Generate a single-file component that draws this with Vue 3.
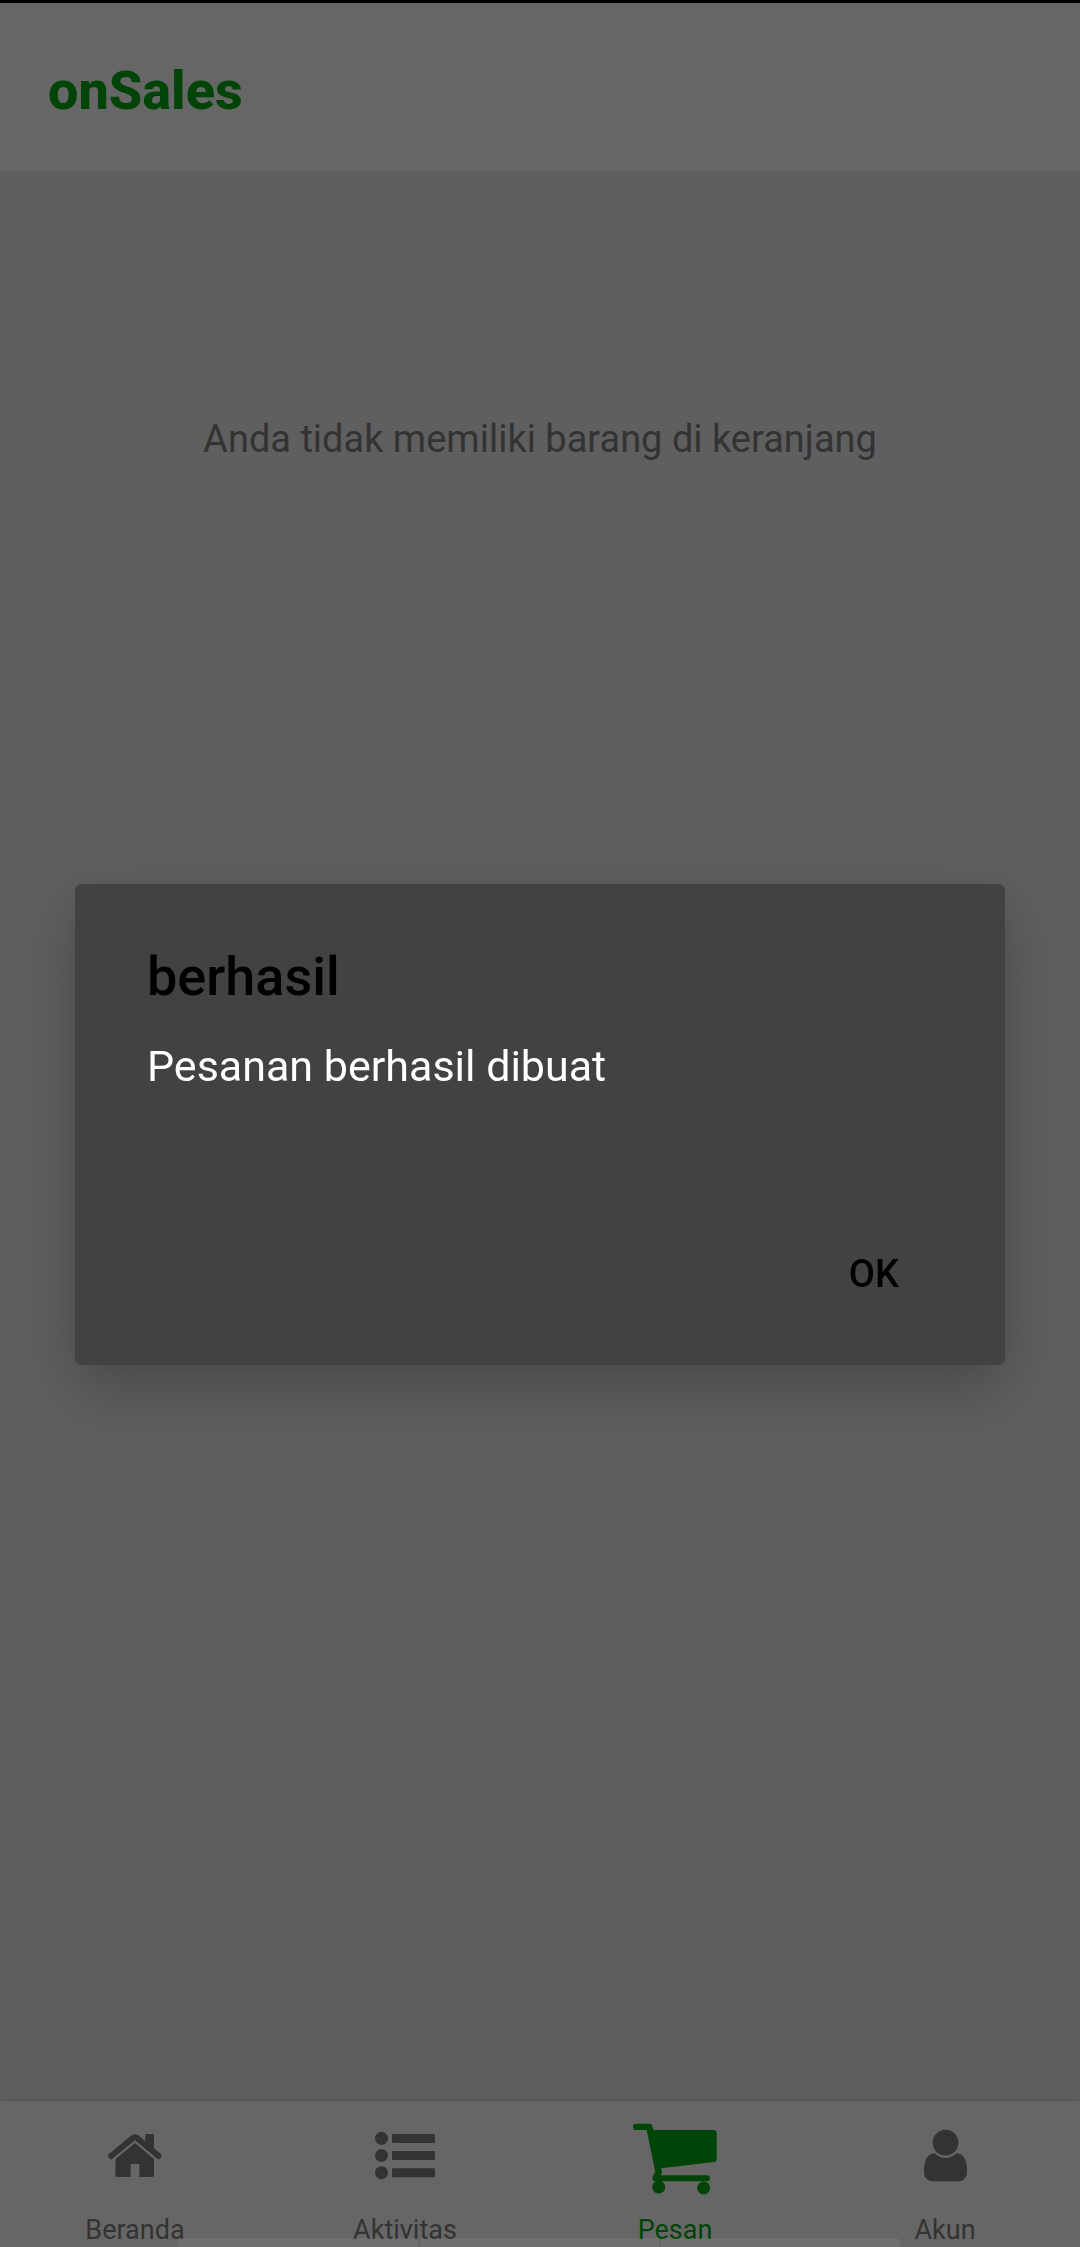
<script setup>
import { ref } from 'vue'

const dialogOpen = ref(true)
const active = ref('Pesan')
const tabs = [
  {
    name: 'Beranda',
    viewBox: '90 120 270 240',
    path: 'M144 228Q144 225 147 222L215 166Q225 159 235 166L256 184V166Q256 162 260 162H278Q282 162 282 166V205L303 222Q307 226 304 230L299 236Q296 239 292 236L225 181L157 236Q153 239 150 236L145 230ZM167 237L225 189L282 237V285Q282 291 276 291H238V252H212V291H173Q166 291 166 284Z'
  },
  {
    name: 'Aktivitas',
    viewBox: '90 120 270 240',
    path: 'M135 175a19.5 19.5 0 1 0 39 0a19.5 19.5 0 1 0-39 0ZM135 226.500a19.5 19.5 0 1 0 39 0a19.5 19.5 0 1 0-39 0ZM135 278a19.5 19.5 0 1 0 39 0a19.5 19.5 0 1 0-39 0ZM189 162H312Q315 162 315 165V186Q315 189 312 189H189Q186 189 186 186V165Q186 162 189 162ZM189 213H312Q315 213 315 216V237Q315 240 312 240H189Q186 240 186 237V216Q186 213 189 213ZM189 264.500H312Q315 264.500 315 267.500V288.500Q315 291.500 312 291.500H189Q186 291.500 186 288.500V267.500Q186 264.500 189 264.500Z'
  },
  {
    name: 'Pesan',
    viewBox: '90 120 270 240',
    path: 'M108 131H149Q155 131 157 138L160 150H341Q350 150 350 159V237Q350 245 342 246L183 265Q187 272 186 278L182 286H321Q330 286 330 295Q330 304 321 304H185A19.5 19.5 0 1 1 167 304Q157 304 157 295Q157 290 166 276L140 150H108Q99 150 99 140.500Q99 131 108 131ZM291.500 324a19.5 19.5 0 1 0 39 0a19.5 19.5 0 1 0-39 0Z'
  },
  {
    name: 'Akun',
    viewBox: '120 120 270 240',
    path: 'M218 188a38.500 38.500 0 1 0 77 0a38.500 38.500 0 1 0-77 0ZM224 220Q238 234 256.500 234Q275 234 289 220Q321 220 321 276Q321 290 312 298Q306 304 297 304H216Q207 304 201 298Q192 290 192 276Q192 220 224 220Z'
  }
]
</script>

<template>
  <div class="screen">
    <header class="bar">
      <h1>onSales</h1>
    </header>

    <main class="content">
      <p>Anda tidak memiliki barang di keranjang</p>
    </main>

    <nav class="tabs">
      <button
        v-for="tab in tabs"
        :key="tab.name"
        type="button"
        class="tab"
        :class="{ active: tab.name === active }"
        @click="active = tab.name"
      >
        <svg class="icon" :viewBox="tab.viewBox" aria-hidden="true">
          <path :d="tab.path" fill="currentColor" />
        </svg>
        <span>{{ tab.name }}</span>
      </button>
      <div class="hint" aria-hidden="true"><i></i><i></i><i></i></div>
    </nav>

    <div v-if="dialogOpen" class="overlay">
      <section class="dialog" role="alertdialog" aria-labelledby="dlg-title" aria-describedby="dlg-text">
        <h2 id="dlg-title">berhasil</h2>
        <p id="dlg-text">Pesanan berhasil dibuat</p>
        <div class="actions">
          <button type="button" @click="dialogOpen = false">OK</button>
        </div>
      </section>
    </div>
  </div>
</template>

<style>
body {
  margin: 0;
  background: #5f5f5f;
}
</style>

<style scoped>
.screen {
  display: flex;
  flex-direction: column;
  min-height: 100vh;
  box-sizing: border-box;
  border-top: 3px solid #000;
  background: #5f5f5f;
  color: #333;
  font-family: Roboto, "Liberation Sans", sans-serif;
}

h1,
h2,
p {
  margin: 0;
}

button {
  border: 0;
  padding: 0;
  background: none;
  color: inherit;
  font: inherit;
  cursor: pointer;
}

.bar {
  padding: 56px 48px 48px;
  background: #666;
}

.bar h1 {
  color: #004408;
  font-size: 54px;
  font-weight: 800;
  line-height: 64px;
}

.content {
  flex: 1;
  padding: 244px 48px 0;
  text-align: center;
  font-size: 38px;
  line-height: 48px;
}

.tabs {
  position: relative;
  display: flex;
  padding: 19px 0 1px;
  background: #666;
  box-shadow: 0 0 2px rgba(0, 0, 0, 0.16), 0 -2px 12px rgba(0, 0, 0, 0.06);
}

.tab {
  flex: 1;
  display: flex;
  flex-direction: column;
  align-items: center;
  gap: 14px;
  font-size: 27px;
  line-height: 32px;
}

.tab.active {
  color: #004408;
}

.icon {
  width: 90px;
  height: 80px;
}

.hint {
  position: absolute;
  left: 178px;
  right: 179px;
  bottom: 0;
  display: flex;
  gap: 2px;
  height: 9px;
  overflow: hidden;
  border-radius: 8px 8px 4px 4px;
  pointer-events: none;
}

.hint i {
  flex: 1;
  background: rgba(255, 255, 255, 0.06);
}

.overlay {
  position: fixed;
  inset: 0;
  display: flex;
  align-items: center;
  padding: 1px 75px 0;
}

.dialog {
  flex: 1;
  padding: 61px 72px 43px;
  border-radius: 6px;
  background: #424242;
  box-shadow: 0 26px 64px rgba(0, 0, 0, 0.22), 0 0 24px rgba(0, 0, 0, 0.05);
}

.dialog h2 {
  color: #000;
  font-size: 54px;
  font-weight: 500;
  line-height: 64px;
}

.dialog p {
  margin-top: 32px;
  color: #fff;
  font-size: 43px;
  line-height: 50px;
}

.actions {
  display: flex;
  justify-content: flex-end;
  margin-top: 135px;
}

.actions button {
  padding: 24px 34px;
  color: #000;
  font-size: 38px;
  font-weight: 500;
  line-height: 48px;
}
</style>
